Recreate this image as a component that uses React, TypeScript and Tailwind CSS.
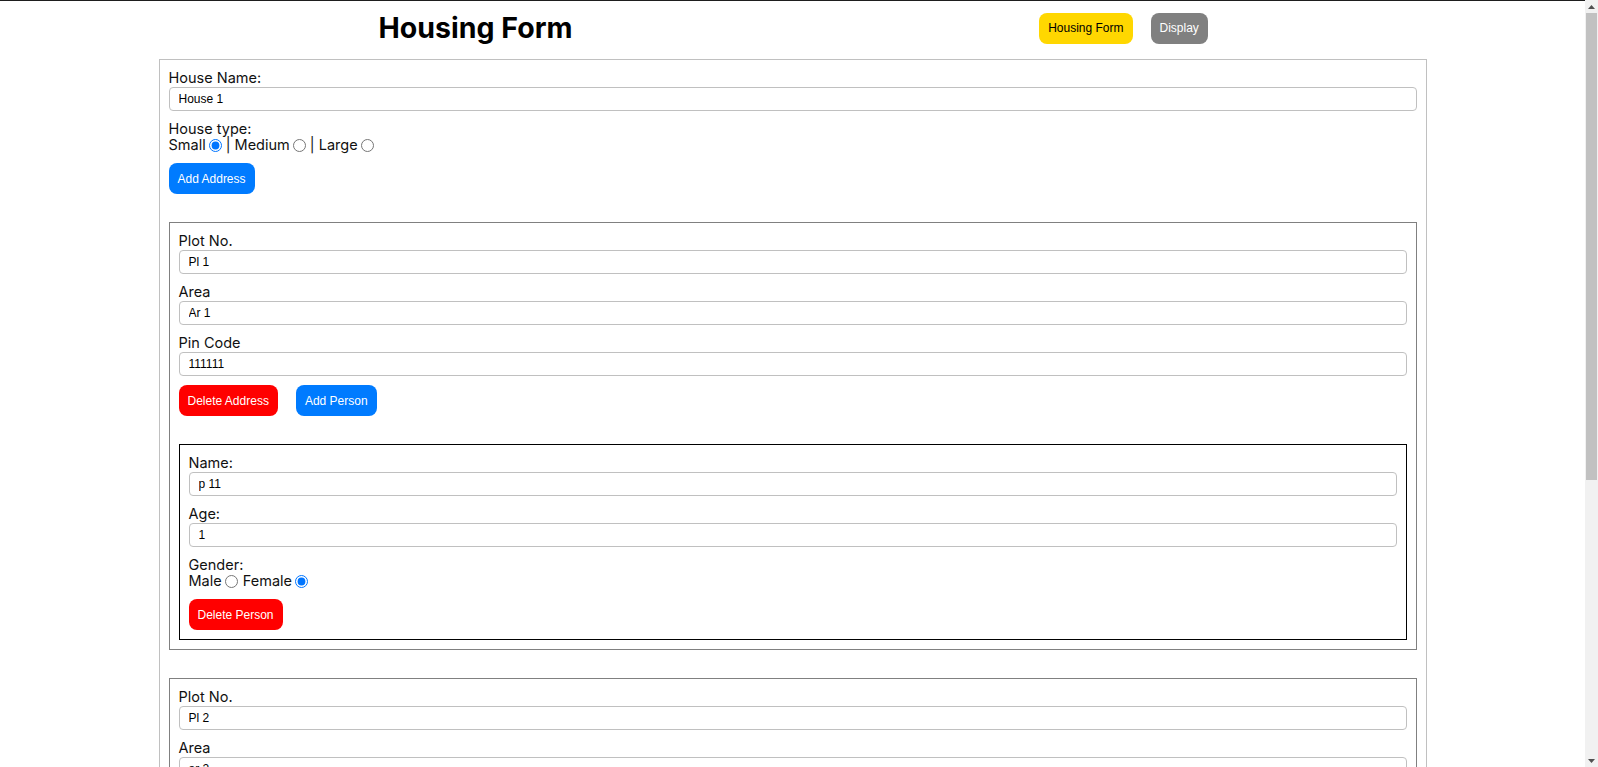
import React from "react";

type Person = { name: string; age: string; gender: "male" | "female" };
type Address = { plot: string; area: string; pin: string; people: Person[] };

const addresses: Address[] = [
  { plot: "Pl 1", area: "Ar 1", pin: "111111", people: [{ name: "p 11", age: "1", gender: "female" }] },
  { plot: "Pl 2", area: "ar 2", pin: "222222", people: [{ name: "p 21", age: "2", gender: "male" }] },
];

const labelCls = "block text-[14.5px] leading-[18px] text-[#111]";
const inputCls =
  "block w-full h-[24px] rounded-[4px] border border-[#c0c0c0] bg-white px-[9px] font-['Liberation_Sans',Arial,sans-serif] text-[12px] text-black outline-none";
const btnCls =
  "h-[31px] rounded-lg px-[9px] font-['Liberation_Sans',Arial,sans-serif] text-[12px] leading-none";
const radioCls = "ml-[3px] mr-[4px] h-[13px] w-[13px]";

const Field = ({ label, value, first }: { label: string; value: string; first?: boolean }) => (
  <div className={first ? "" : "mt-[9px]"}>
    <label className={labelCls}>{label}</label>
    <input className={inputCls} value={value} readOnly />
  </div>
);

const PersonCard = ({ person }: { person: Person }) => (
  <div className="mt-[28px] border border-black p-[9px]">
    <Field label="Name:" value={person.name} first />
    <Field label="Age:" value={person.age} />
    <label className="mt-[10px] block text-[14.5px] leading-4 text-[#111]">Gender:</label>
    <div className="flex h-4 items-center text-[14.5px] leading-4 text-[#111]">
      <span>Male</span>
      <input type="radio" className="ml-[3px] mr-[1px] h-[13px] w-[13px]" checked={person.gender === "male"} readOnly />
      <span className="whitespace-pre"> Female</span>
      <input type="radio" className={radioCls} checked={person.gender === "female"} readOnly />
    </div>
    <button className={`${btnCls} mt-[10px] bg-[#ff0000] text-white`}>Delete Person</button>
  </div>
);

const AddressCard = ({ address }: { address: Address }) => (
  <div className="mt-[28px] border border-[#808080] p-[9px]">
    <Field label="Plot No." value={address.plot} first />
    <Field label="Area" value={address.area} />
    <Field label="Pin Code" value={address.pin} />
    <div className="mt-[9px] flex gap-[18px]">
      <button className={`${btnCls} bg-[#ff0000] text-white`}>Delete Address</button>
      <button className={`${btnCls} bg-[#007bff] text-white`}>Add Person</button>
    </div>
    {address.people.map((p, i) => (
      <PersonCard key={i} person={p} />
    ))}
  </div>
);

// stands in for the browser's scrollbar seen in the screenshot
const Scrollbar = () => (
  <div className="fixed right-0 top-0 flex h-screen w-[13px] flex-col bg-[#f1f1f1]">
    <div className="flex h-[13px] items-center justify-center">
      <svg width="7" height="4" viewBox="0 0 7 4">
        <path d="M0 4 L3.5 0 L7 4 Z" fill="#505050" />
      </svg>
    </div>
    <div className="mx-[1px] h-[467px] bg-[#c1c1c1]" />
    <div className="flex-1" />
    <div className="flex h-[13px] items-center justify-center">
      <svg width="7" height="4" viewBox="0 0 7 4">
        <path d="M0 0 L3.5 4 L7 0 Z" fill="#505050" />
      </svg>
    </div>
  </div>
);

const App = () => {
  return (
    <div className="min-h-screen border-t border-[#1e1e1e] bg-white font-['Inter',sans-serif]">
      <div className="w-[calc(100%-13px)] pb-[35px]">
        <div className="mx-auto w-[80%]">
          <div className="grid h-[54px] grid-cols-2 items-center">
            <div className="flex justify-center">
              <h1 className="text-[28.5px] font-bold text-black">Housing Form</h1>
            </div>
            <div className="flex justify-center gap-[18px] pl-[28px]">
              <button className={`${btnCls} bg-[#ffd700] text-black`}>Housing Form</button>
              <button className={`${btnCls} bg-[#808080] text-white`}>Display</button>
            </div>
          </div>

          <div className="mt-[4px] border border-[#c0c0c0] p-[9px]">
            <Field label="House Name:" value="House 1" first />
            <label className="mt-[10px] block text-[14.5px] leading-4 text-[#111]">House type:</label>
            <div className="flex h-4 items-center text-[14.5px] leading-4 text-[#111]">
              <span>Small</span>
              <input type="radio" className={radioCls} checked readOnly />
              <span className="whitespace-pre">| Medium</span>
              <input type="radio" className={radioCls} checked={false} readOnly />
              <span className="whitespace-pre">| Large</span>
              <input type="radio" className={radioCls} checked={false} readOnly />
            </div>
            <button className={`${btnCls} mt-[10px] bg-[#007bff] text-white`}>Add Address</button>

            {addresses.map((a, i) => (
              <AddressCard key={i} address={a} />
            ))}

            <button className={`${btnCls} mt-[28px] bg-[#28a745] text-white`}>Submit</button>
          </div>
        </div>
      </div>
      <Scrollbar />
    </div>
  );
};

export default App;
